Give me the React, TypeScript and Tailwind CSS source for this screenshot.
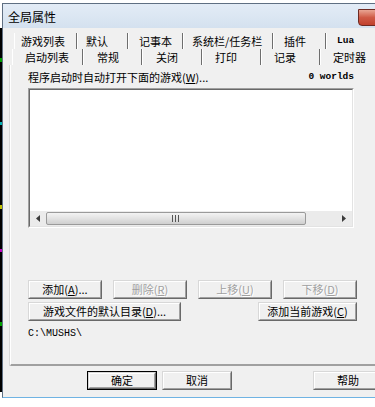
import type { ReactNode } from 'react'

const cjk = { fontFamily: '"Noto Sans CJK SC", "Noto Sans", sans-serif' }
const mono = { fontFamily: '"Liberation Mono", "DejaVu Sans Mono", monospace' }

interface Tab {
  label: string
  w: number
  pl: number
  mono?: boolean
}

const backRow: Tab[] = [
  { label: '游戏列表', w: 62, pl: 6 },
  { label: '默认', w: 51, pl: 9 },
  { label: '记事本', w: 55, pl: 11 },
  { label: '系统栏/任务栏', w: 90, pl: 9 },
  { label: '插件', w: 53, pl: 11 },
  { label: 'Lua', w: 70, pl: 11, mono: true },
]

const frontRow: Tab[] = [
  { label: '启动列表', w: 70, pl: 12 },
  { label: '常规', w: 59, pl: 14 },
  { label: '关闭', w: 60, pl: 14 },
  { label: '打印', w: 59, pl: 13 },
  { label: '记录', w: 59, pl: 13 },
  { label: '定时器', w: 70, pl: 13 },
]

function TabRow({ tabs, first }: { tabs: Tab[]; first: number }) {
  return (
    <div className="flex h-[16px]" style={{ marginLeft: first }}>
      <div className="w-[1px] h-full bg-white" />
      {tabs.map(t => (
        <div
          key={t.label}
          className="flex items-center h-full shrink-0 border-r border-[#6e6e6e] shadow-[1px_0_0_#ffffff]"
          style={{ width: t.w, paddingLeft: t.pl }}
        >
          <span
            className={t.mono ? 'text-[9.5px] leading-none text-black font-bold' : 'text-[11px] leading-none text-black whitespace-nowrap'}
            style={t.mono ? mono : cjk}
          >
            {t.label}
          </span>
        </div>
      ))}
    </div>
  )
}

function Btn({
  w,
  children,
  disabled,
  isDefault,
}: {
  w: number
  children: ReactNode
  disabled?: boolean
  isDefault?: boolean
}) {
  const face = (
    <div className="flex-1 flex items-center justify-center border border-t-white border-l-white border-r-[#a0a0a0] border-b-[#a0a0a0] bg-[#f0f0f0]">
      <span
        className={
          disabled
            ? 'text-[11px] leading-none whitespace-nowrap text-[#a0a0a0] [text-shadow:1px_1px_0_#ffffff]'
            : 'text-[11px] leading-none whitespace-nowrap text-black'
        }
        style={cjk}
      >
        {children}
      </span>
    </div>
  )
  return (
    <div
      className={
        isDefault
          ? 'h-[19px] shrink-0 flex border border-black'
          : 'h-[19px] shrink-0 flex'
      }
      style={{ width: w }}
    >
      <div className="flex-1 flex border border-t-[#d8d8d8] border-l-[#d8d8d8] border-r-[#696969] border-b-[#696969]">
        {face}
      </div>
    </div>
  )
}

function Key({ k }: { k: string }) {
  return (
    <>
      (<span className="underline">{k}</span>)
    </>
  )
}

function ScrollBar() {
  return (
    <div className="h-[15px] flex bg-[#ebebeb]">
      <div className="w-[16px] flex items-center justify-center">
        <svg width="4" height="7" viewBox="0 0 4 7">
          <path d="M4 0 L0 3.5 L4 7 Z" fill="#3c3c3c" />
        </svg>
      </div>
      <div className="w-[260px] my-[1px] rounded-[2px] border border-[#9a9a9a] bg-gradient-to-b from-[#f3f3f3] via-[#e2e2e2] to-[#cfcfcf] flex items-center justify-center">
        <svg width="8" height="7" viewBox="0 0 8 7">
          <path d="M0.5 0 V7 M3.5 0 V7 M6.5 0 V7" stroke="#555" strokeWidth="1" />
        </svg>
      </div>
      <div className="flex-1" />
      <div className="w-[16px] flex items-center justify-center">
        <svg width="4" height="7" viewBox="0 0 4 7">
          <path d="M0 0 L4 3.5 L0 7 Z" fill="#3c3c3c" />
        </svg>
      </div>
    </div>
  )
}

export default function App() {
  return (
    <div className="w-[375px] h-[407px] bg-white overflow-hidden flex flex-col">
      <div className="h-[3px] shrink-0 bg-white" />
      <div className="flex h-[395px] shrink-0">
        {/* console behind the dialog */}
        <div className="w-[2px] shrink-0 flex flex-col pt-[25px] pb-[6px]">
          <div className="flex-1 bg-black flex flex-col">
            <div className="h-[30px]" />
            <div className="h-[4px] bg-[#00a000]" />
            <div className="h-[60px]" />
            <div className="h-[3px] bg-[#00b0b0]" />
            <div className="h-[80px]" />
            <div className="h-[4px] bg-[#c0c000]" />
            <div className="h-[40px]" />
            <div className="h-[3px] bg-[#c000c0]" />
            <div className="h-[70px]" />
            <div className="h-[4px] bg-[#00a000]" />
          </div>
        </div>

        {/* dialog window */}
        <div className="w-[404px] shrink-0 flex flex-col border-l border-t border-[#5f6f82] border-b border-b-[#6fb3e3]">
          {/* title bar */}
          <div className="h-[24px] shrink-0 flex items-start bg-gradient-to-b from-[#e3ecf6] to-[#d4e1ef]">
            <span className="pl-[5px] pt-[7px] text-[12px] leading-none text-black" style={cjk}>
              全局属性
            </span>
            <div className="ml-auto mr-[5px] mt-[5px] w-[43px] h-[17px] rounded-b-[4px] border border-[#6e2a22] bg-gradient-to-b from-[#e8a493] via-[#cf5a46] to-[#c1412d] flex items-center justify-center">
              <svg width="10" height="9" viewBox="0 0 10 9">
                <path d="M1 1 L9 8 M9 1 L1 8" stroke="#4a1a14" strokeWidth="3" />
                <path d="M1 1 L9 8 M9 1 L1 8" stroke="#ffffff" strokeWidth="1.6" />
              </svg>
            </div>
          </div>

          {/* client area */}
          <div className="flex-1 flex flex-col bg-[#f0f0f0] pl-[7px] pt-[5px]">
            <TabRow tabs={backRow} first={4} />
            <TabRow tabs={frontRow} first={2} />

            {/* page */}
            <div className="h-[301px] shrink-0 flex flex-col border-l border-l-white shadow-[-1px_0_0_#d8d8d8] border-b-2 border-b-[#a0a0a0] pl-[17px] pt-[6px]">
              <div className="w-[326px] flex items-center justify-between h-[12px]">
                <span className="text-[11px] leading-none text-black" style={cjk}>
                  程序启动时自动打开下面的游戏<Key k="W" />...
                </span>
                <span className="text-[9.5px] leading-none text-black font-bold" style={mono}>
                  0 worlds
                </span>
              </div>

              <div className="mt-[5px] w-[326px] h-[140px] flex border border-t-[#a0a0a0] border-l-[#a0a0a0] border-r-white border-b-white">
                <div className="flex-1 flex flex-col border border-t-[#696969] border-l-[#696969] border-r-[#e3e3e3] border-b-[#e3e3e3] bg-white">
                  <div className="flex-1" />
                  <ScrollBar />
                </div>
              </div>

              <div className="mt-[52px] w-[329px] flex justify-between">
                <Btn w={74}>
                  添加<Key k="A" />...
                </Btn>
                <Btn w={74} disabled>
                  删除<Key k="R" />
                </Btn>
                <Btn w={74} disabled>
                  上移<Key k="U" />
                </Btn>
                <Btn w={74} disabled>
                  下移<Key k="D" />
                </Btn>
              </div>
              <div className="mt-[3px] w-[329px] flex justify-between">
                <Btn w={153}>
                  游戏文件的默认目录<Key k="D" />...
                </Btn>
                <Btn w={99}>
                  添加当前游戏<Key k="C" />
                </Btn>
              </div>

              <div className="mt-[7px] text-[10px] leading-[12px] text-black" style={mono}>
                C:\MUSHS\
              </div>
            </div>

            {/* dialog buttons */}
            <div className="mt-[5px] flex pl-[77px]">
              <Btn w={70} isDefault>
                确定
              </Btn>
              <div className="w-[5px]" />
              <Btn w={70}>取消</Btn>
              <div className="w-[81px]" />
              <Btn w={70}>帮助</Btn>
            </div>
          </div>
        </div>
      </div>
    </div>
  )
}
